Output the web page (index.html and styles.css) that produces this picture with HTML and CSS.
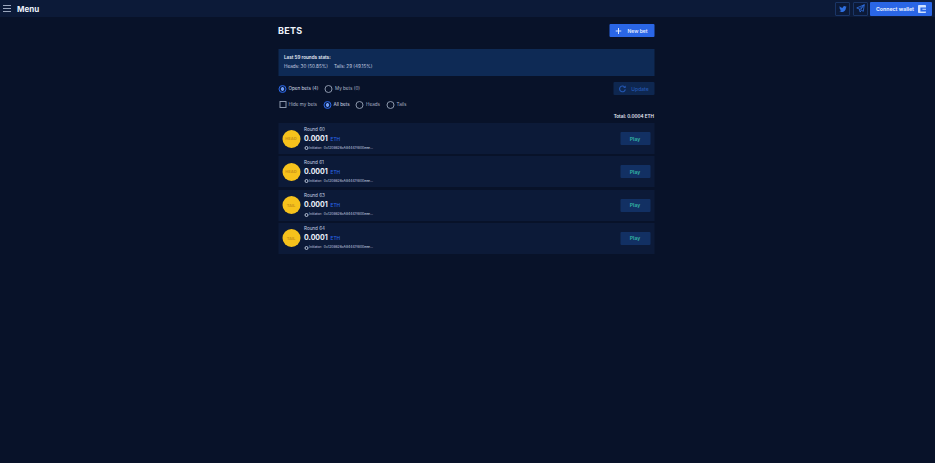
FILE: index.html
```html
<!DOCTYPE html>
<html lang="en">
<head>
<meta charset="utf-8">
<title>Bets</title>
<link rel="stylesheet" href="styles.css">
</head>
<body>
<header class="topbar">
  <div class="brand">
    <svg class="burger" viewBox="0 0 8 7" width="8" height="7"><path d="M0 .5h8M0 3.500h8M0 6.500h8" stroke="#9aa6bd" stroke-width="1.100"/></svg>
    <span class="menu-label">Menu</span>
  </div>
  <div class="top-actions">
    <a class="social"><svg viewBox="0 0 24 24" width="8" height="8"><path fill="#2f6fe0" d="M23 5c-.8.4-1.700.6-2.600.7.900-.6 1.700-1.400 2-2.500-.9.500-1.900.9-2.900 1.100A4.600 4.600 0 0 0 11.700 8.500C7.900 8.300 4.500 6.500 2.200 3.700c-1.200 2.100-.6 4.800 1.400 6.100-.7 0-1.400-.2-2.100-.6 0 2.200 1.600 4.100 3.700 4.600-.7.200-1.400.2-2.100.1.600 1.900 2.300 3.200 4.300 3.200A9.300 9.300 0 0 1 .6 19c2.100 1.300 4.500 2.100 7.100 2.100 8.600 0 13.400-7.200 13.100-13.800.9-.6 1.700-1.400 2.200-2.300z"/></svg></a>
    <a class="social"><svg viewBox="0 0 24 24" width="9" height="9"><path fill="none" stroke="#2f6fe0" stroke-width="2.200" stroke-linejoin="round" d="M22 2 2 10.500l7 3 2 8 3.500-5 5 3zM9 13.500 22 2 11.500 16.500"/></svg></a>
    <button class="connect"><span>Connect wallet</span>
      <svg viewBox="0 0 10 10" width="8" height="8"><rect width="10" height="10" rx="1" fill="#cfe0ff"/><path d="M3 3h7v1.800H5.500v1H10V8H3z" fill="#2a66e6"/></svg>
    </button>
  </div>
</header>

<main class="page">
  <div class="title-row">
    <h1 class="title">BETS</h1>
    <button class="new-bet"><svg viewBox="0 0 7 7" width="6" height="6"><path d="M3.500 0v7M0 3.500h7" stroke="#e8efff" stroke-width="1.100"/></svg><span>New bet</span></button>
  </div>

  <section class="stats">
    <p class="stats-head">Last 59 rounds stats:</p>
    <p class="stats-line"><span>Heads: 30 (50.85%)</span><span>Tails: 29 (49.15%)</span></p>
  </section>

  <div class="filter-row">
    <div class="group">
      <label class="opt"><i class="radio on"></i>Open bets (4)</label>
      <label class="opt dim"><i class="radio"></i>My bets (0)</label>
    </div>
    <button class="update"><svg viewBox="0 0 10 10" width="8" height="8"><path d="M8.500 5.500A3.600 3.600 0 1 1 7.500 2.300" fill="none" stroke="#2457b3" stroke-width="1.400"/><path d="M9 .6V3.800H5.800z" fill="#2457b3"/></svg><span>Update</span></button>
  </div>

  <div class="filter-second">
    <label class="opt dim"><i class="check"></i>Hide my bets</label>
    <label class="opt"><i class="radio on"></i>All bets</label>
    <label class="opt dim"><i class="radio"></i>Heads</label>
    <label class="opt dim"><i class="radio"></i>Tails</label>
  </div>

  <div class="total">Total: 0.0004 ETH</div>

  <ul class="list">
    <li class="row">
      <div class="coin">HEAD</div>
      <div class="info">
        <div class="round">Round 60</div>
        <div class="amount">0.0001 <span class="cur">ETH</span></div>
        <div class="initiator"><i class="dot"></i>Initiator: &nbsp;0x1208626cA84447f800eee...</div>
      </div>
      <button class="play">Play</button>
    </li>
    <li class="row">
      <div class="coin">HEAD</div>
      <div class="info">
        <div class="round">Round 61</div>
        <div class="amount">0.0001 <span class="cur">ETH</span></div>
        <div class="initiator"><i class="dot"></i>Initiator: &nbsp;0x1208626cA84447f800eee...</div>
      </div>
      <button class="play">Play</button>
    </li>
    <li class="row">
      <div class="coin">TAIL</div>
      <div class="info">
        <div class="round">Round 63</div>
        <div class="amount">0.0001 <span class="cur">ETH</span></div>
        <div class="initiator"><i class="dot"></i>Initiator: &nbsp;0x1208626cA84447f800eee...</div>
      </div>
      <button class="play">Play</button>
    </li>
    <li class="row">
      <div class="coin">TAIL</div>
      <div class="info">
        <div class="round">Round 64</div>
        <div class="amount">0.0001 <span class="cur">ETH</span></div>
        <div class="initiator"><i class="dot"></i>Initiator: &nbsp;0x1208626cA84447f800eee...</div>
      </div>
      <button class="play">Play</button>
    </li>
  </ul>
</main>
</body>
</html>
```

FILE: styles.css
```css
* { box-sizing: border-box; }
html, body { margin: 0; height: 100%; }
body {
  background: #081229;
  color: #dfe6f3;
  font-family: Inter, "Liberation Sans", sans-serif;
  font-size: 4.6px;
  overflow: hidden;
}
button { font-family: inherit; border: 0; padding: 0; cursor: pointer; }
svg { flex: none; display: block; }
p, h1, ul { margin: 0; padding: 0; }

.topbar {
  height: 17px;
  background: #0c1a38;
  display: flex;
  justify-content: space-between;
  align-items: center;
  padding: 0 3px;
}
.brand { display: flex; align-items: center; gap: 6px; }
.menu-label { font-size: 8px; font-weight: 700; color: #eef2fb; }
.top-actions { display: flex; align-items: center; gap: 2.5px; }
.social {
  width: 15px; height: 14px;
  border: 1px solid #1a3566;
  border-radius: 1px;
  display: flex; align-items: center; justify-content: center;
}
.connect {
  width: 62px; height: 14px;
  background: #2a66e6;
  border-radius: 1px;
  color: #e4ecff;
  font-size: 5.2px;
  font-weight: 700;
  white-space: nowrap;
  display: flex; align-items: center; justify-content: space-between;
  padding: 0 6px;
}

.page {
  width: 376px;
  margin: 0 auto;
  transform: translateX(-1.5px);
}
.title-row {
  display: flex;
  justify-content: space-between;
  align-items: flex-start;
  padding-top: 7px;
  height: 32px;
}
.title { font-size: 9px; line-height: 13px; font-weight: 700; letter-spacing: .3px; color: #eef2fb; }
.new-bet {
  width: 45px; height: 13px;
  background: #2a66e6;
  border-radius: 1px;
  color: #e4ecff;
  font-size: 5px;
  font-weight: 600;
  white-space: nowrap;
  display: flex; align-items: center; justify-content: center;
  gap: 6px;
}
.stats {
  height: 27px;
  background: #0e2a55;
  padding: 4px 6px 0;
  font-size: 4.6px;
  line-height: 9px;
}
.stats-head { font-weight: 600; color: #e6ecf7; }
.stats-line { display: flex; gap: 6px; color: #c5cfe0; }

.filter-row {
  margin-top: 6px;
  height: 13px;
  display: flex;
  justify-content: space-between;
  align-items: center;
}
.group { display: flex; gap: 6px; }
.opt { display: flex; align-items: center; gap: 2.5px; color: #d4dcea; font-size: 4.6px; white-space: nowrap; }
.opt.dim { color: #a9b4c8; }
.radio {
  width: 8px; height: 8px;
  border: 1px solid #8c97ab;
  border-radius: 50%;
  display: block;
  flex: none;
}
.radio.on {
  border-color: #2a66e6;
  background: radial-gradient(circle, #6f9bf2 0 1.5px, #0d2048 2px);
}
.check {
  width: 7px; height: 7px;
  margin-left: 1px;
  border: 1px solid #8c97ab;
  display: block;
  flex: none;
}
.update {
  width: 41px; height: 13px;
  background: #0e2750;
  border-radius: 1px;
  color: #2457b3;
  font-size: 5px;
  font-weight: 500;
  display: flex; align-items: center; justify-content: center;
  gap: 5px;
}
.filter-second {
  margin-top: 5px;
  height: 9px;
  display: flex;
  align-items: center;
  gap: 6px;
}
.total {
  margin-top: 3px;
  height: 10px;
  text-align: right;
  font-size: 4.6px;
  font-weight: 600;
  color: #e6ecf7;
  line-height: 10px;
}
.list { list-style: none; margin-top: 1px; display: flex; flex-direction: column; gap: 2.3px; }
.row {
  height: 31px;
  background: #0c1a38;
  display: flex;
  align-items: center;
  padding: 0 4px;
}
.coin {
  width: 18px; height: 18px;
  border-radius: 50%;
  background: #f6c21c;
  color: #c9941a;
  font-size: 4px;
  font-weight: 700;
  display: flex; align-items: center; justify-content: center;
  flex: none;
}
.info { margin-left: 4px; flex: 1; }
.round { font-size: 4.6px; color: #c5cfe0; line-height: 6px; }
.amount { font-size: 7px; font-weight: 700; color: #eef2fb; line-height: 9px; margin-top: 1px; }
.cur { font-size: 4.8px; font-weight: 500; color: #2a66e6; margin-left: 1px; }
.initiator { display: flex; align-items: center; font-size: 3.4px; color: #c5cfe0; margin-top: 2px; line-height: 5px; }
.dot {
  width: 4px; height: 4px;
  border: 1px solid #b9c4d8;
  border-radius: 50%;
  margin-right: 1px;
  display: block;
}
.play {
  width: 30px; height: 13px;
  background: #123063;
  border-radius: 1px;
  color: #35b6a6;
  font-size: 5px;
  font-weight: 600;
}
```
